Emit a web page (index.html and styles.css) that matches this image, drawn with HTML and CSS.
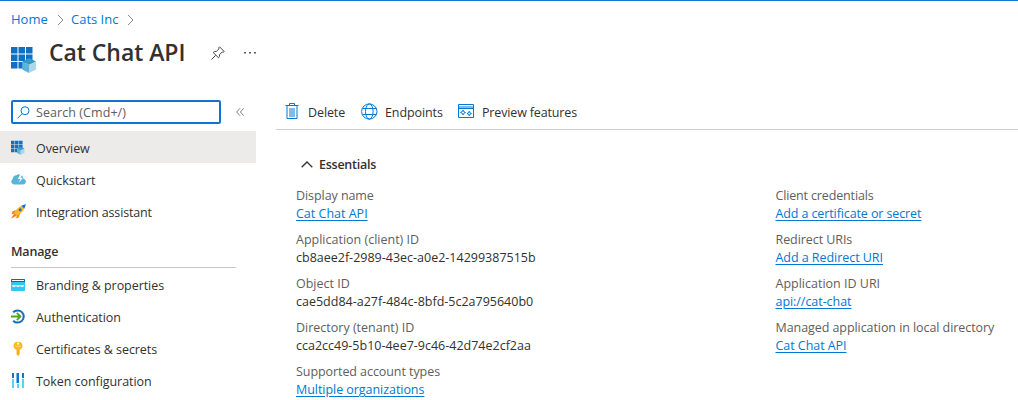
FILE: index.html
```html
<!DOCTYPE html>
<html lang="en">
<head>
<meta charset="utf-8">
<title>Cat Chat API</title>
<link rel="stylesheet" href="styles.css">
</head>
<body>
<svg width="0" height="0" class="defs" aria-hidden="true">
  <symbol id="app" viewBox="0 0 26 27">
    <path fill="#1070c4" d="M0 1h6.500v6.500H0zM7.500 1H14v6.500H7.500zM15 1h6.500v6.500H15zM0 8.500h6.500V15H0zM7.500 8.500H14V15H7.500zM15 8.500h6.500V15H15zM0 16h6.500v6.500H0zM7.500 16H14v6.500H7.500z"/>
    <path fill="#3999c6" d="M11.200 15.500 18 12l7 3.500-7 3.500z"/>
    <path fill="#5ab4d9" d="M11.200 15.500 18 19v8l-6.800-3.500z"/>
    <path fill="#a8d8ea" d="M25 15.500 18 19v8l7-3.500z"/>
  </symbol>
</svg>
<header class="top">
  <nav class="crumbs">
    <a class="home">Home</a><svg width="7" height="12" class="sep"><path d="M1 1l5 5-5 5"/></svg>
    <a class="cats">Cats Inc</a><svg width="7" height="12" class="sep"><path d="M1 1l5 5-5 5"/></svg>
  </nav>
  <div class="titlebar">
    <svg class="logo" width="26" height="27"><use href="#app"/></svg>
    <h1>Cat Chat API</h1>
    <svg class="pin" width="14" height="14" viewBox="0 0 14 14"><path d="M8.500.8 13.200 5.500 12.200 6.200 11.200 6 8.600 8.600Q8.900 10.500 7.500 11.800L2.200 6.500Q3.500 5.100 5.400 5.400L8 2.800 7.800 1.700zM4.700 9.300.5 13.500"/></svg>
    <svg class="dots" width="12" height="2"><path d="M0 0h2v1.500H0zM5 0h2v1.500H5zM10 0h2v1.500h-2z"/></svg>
  </div>
</header>
<div class="layout">
  <aside class="side">
    <div class="searchrow">
      <div class="search">
        <svg width="13" height="13" viewBox="0 0 13 13"><circle cx="8" cy="4.700" r="4"/><path d="M5.100 7.700.5 12.400"/></svg>
        <span>Search (Cmd+/)</span>
      </div>
      <svg class="collapse" width="8" height="8"><path d="M4 .3.700 4 4 7.700M7.700.3 4.400 4l3.300 3.700"/></svg>
    </div>
    <ul class="menu">
      <li class="active"><svg width="14" height="15"><use href="#app"/></svg><span>Overview</span></li>
      <li><svg width="15" height="15" viewBox="0 0 15 15"><path fill="#59b4d9" d="M3 12.500A3 3 0 0 1 1.700 7Q2 3.500 5.500 3.200 7 1.700 9 2.700 12 3 12.300 6.500 15 7.200 15 9.800 14.700 12.300 12 12.500z"/><path fill="#fff" d="M9.500 2 6.800 7h2.400L8 10.800 12 5.700H9.600L11.500 2z"/></svg><span>Quickstart</span></li>
      <li><svg width="15" height="15" viewBox="0 0 15 15"><path fill="#f78d1e" d="M5 6 1.500 7.300.5 10.500 4 9.500zM9 9.800 8 13.500 5 14.500 6 10.800z"/><path fill="#f47b20" d="M3.600 9 0 14.700 6 11.400z"/><path fill="#ffb52e" d="M3.300 9.300Q5.500 3.700 10.500 1.700L13.300 4.600Q11 9.600 5.700 11.700z"/><path fill="#0f6fc5" d="M10.400 1.700 14.900 0 13.300 4.700z"/><circle cx="9.200" cy="5.800" r="1.500" fill="#1374c9"/></svg><span class="snug">Integration assistant</span></li>
    </ul>
    <h2>Manage</h2>
    <ul class="menu">
      <li><svg width="14" height="12" viewBox="0 0 14 12"><path fill="#32c8ee" d="M0 2h14v9.300q0 .7-.7.700H.7Q0 12 0 11.300z"/><path fill="#1763b3" d="M.7 0h12.600q.7 0 .7.700V3H0V.7Q0 0 .7 0"/><path fill="#fff" d="M1 1h12v1H1z"/><path fill="none" stroke="#fff" stroke-width=".8" d="m1.500 6 .7 2 .8-2 .8 2 .8-2M5.500 6l.7 2L7 6l.8 2 .7-2m1 0 .7 2 .8-2 .8 2 .8-2"/></svg><span>Branding &amp; properties</span></li>
      <li><svg width="15" height="15" viewBox="0 0 15 15"><path fill="none" stroke="#0f6fc5" stroke-width="2" d="M2.200 3.300A6.100 6.100 0 1 1 2.200 11.700"/><path fill="none" stroke="#55a51c" stroke-width="1.800" d="M0 7.500h9M5.800 3.900l3.600 3.600-3.600 3.600"/></svg><span>Authentication</span></li>
      <li><svg width="15" height="15" viewBox="0 0 15 15"><path fill="#fdb924" d="M5.500 8.700Q2.500 7.700 2.500 4.700 2.600.8 7 .7 11.400.8 11.500 4.700 11.500 7.700 8.700 8.700V13.200L7.300 15 5.500 13.500z"/><circle cx="7" cy="2.700" r="1.100" fill="#fff"/><path fill="#fde08a" d="M4.400 4.800h5.200v.9H4.400z"/><path fill="#e8a21a" d="M6.500 8.700h.8v5h-.8z"/></svg><span>Certificates &amp; secrets</span></li>
      <li><svg width="14" height="15" viewBox="0 0 14 15"><path fill="#1673c8" d="M1 0h2v5H1zM6 0h2v10H6zM11 0h2v5h-2z"/><path fill="#55d4f2" d="M1 6h2v9H1zM6 11h2v4H6zM11 6h2v9h-2z"/><path fill="#76bdec" d="M5 0h1v10H5z"/></svg><span>Token configuration</span></li>
    </ul>
  </aside>
  <main class="main">
    <div class="toolbar">
      <button class="delete"><svg width="14" height="17" viewBox="0 0 14 17"><path fill="#83b9eb" stroke="none" d="M4 5h6v9H4z"/><path d="M.5 2.500h13M4.500 2V.5h5V2M2 3v12.500h10V3"/></svg><span>Delete</span></button>
      <button class="endpoints"><svg width="17" height="17" viewBox="0 0 17 17"><path d="M.6 8.500a7.700 7.600 0 1 0 15.400 0 7.700 7.600 0 1 0-15.400 0M4.500 8.500a3.800 7.600 0 1 0 7.600 0 3.800 7.600 0 1 0-7.600 0M1.500 5.500h14M1.500 11.500h14"/></svg><span>Endpoints</span></button>
      <button class="preview"><svg width="16" height="14" viewBox="0 0 16 14"><path fill="#83b9eb" stroke="none" d="M1 2h14v2H1z"/><path d="M.5.500h15v13H.5zM1 4.500h14M5 6l.8 1.700L7.500 8.500l-1.700.8L5 11l-.8-1.700-1.700-.8 1.700-.8zM11.200 7.200l.7 1.600 1.600.7-1.600.7-.7 1.600-.7-1.600-1.600-.7 1.600-.7z"/></svg><span class="snug">Preview features</span></button>
    </div>
    <section class="essentials">
      <h3><svg width="12" height="7"><path d="M.7 6.300 6 1l5.300 5.300"/></svg><span>Essentials</span></h3>
      <div class="cols">
        <dl>
          <dt>Display name</dt><dd><a class="plain">Cat Chat API</a></dd>
          <dt class="plain">Application (client) ID</dt><dd>cb8aee2f-2989-43ec-a0e2-14299387515b</dd>
          <dt class="plain">Object ID</dt><dd>cae5dd84-a27f-484c-8bfd-5c2a795640b0</dd>
          <dt class="plain">Directory (tenant) ID</dt><dd>cca2cc49-5b10-4ee7-9c46-42d74e2cf2aa</dd>
          <dt>Supported account types</dt><dd><a>Multiple organizations</a></dd>
        </dl>
        <dl>
          <dt class="snug">Client credentials</dt><dd><a class="snug">Add a certificate or secret</a></dd>
          <dt>Redirect URIs</dt><dd><a>Add a Redirect URI</a></dd>
          <dt class="plain">Application ID URI</dt><dd><a>api://cat-chat</a></dd>
          <dt>Managed application in local directory</dt><dd><a>Cat Chat API</a></dd>
        </dl>
      </div>
    </section>
  </main>
</div>
</body>
</html>
```
FILE: styles.css
```css
* { box-sizing: border-box; }
body { margin: 0; width: 1018px; height: 400px; overflow: hidden; background: #fff; color: #323130; font: 12.5px/18px "Open Sans", "Noto Sans", sans-serif; white-space: nowrap; }
h1, h2, h3, ul, dl, dd { margin: 0; padding: 0; }
ul { list-style: none; }
svg { display: block; flex: none; }
.defs { position: absolute; }
.top { height: 91px; border-top: 1px solid #0f78d4; }
.crumbs { display: flex; align-items: center; height: 18px; margin: 9px 0 0 11px; font-size: 13px; }
.crumbs a { color: #0078d4; }
.home { width: 46px; }
.cats { width: 56px; margin-left: 7px; }
.sep { fill: none; stroke: #8a8886; margin-top: 2px; }
.titlebar { display: flex; align-items: flex-start; padding: 8px 0 0 11px; }
.logo { margin-top: 10px; }
h1 { width: 162px; margin-left: 12px; font-size: 23px; line-height: 32px; font-weight: 600; letter-spacing: -.05px; }
.pin { fill: none; stroke: #484644; margin-top: 10px; }
.dots { fill: #605e5c; margin: 16px 0 0 19px; }
.layout { display: flex; }
.side { width: 276px; }
.searchrow { display: flex; align-items: center; padding: 9px 0 7px 11px; }
.search { display: flex; align-items: center; gap: 6px; width: 210px; height: 24px; padding-left: 4px; border: 2px solid #0f74d0; border-radius: 2px; color: #605e5c; }
.search span { padding-top: 2px; letter-spacing: .07px; }
.search svg { fill: none; stroke: #0078d4; }
.collapse { margin-left: 15px; fill: none; stroke: #605e5c; stroke-width: .8; }
.menu li { display: grid; grid-template-columns: 25px 1fr; align-items: center; width: 256px; height: 32px; padding-left: 11px; letter-spacing: -.06px; }
.menu li svg { margin-top: 1px; }
.menu li span { padding-top: 4px; }
.menu li .snug, .snug, dd .snug { letter-spacing: -.15px; }
.active { background: #edebe9; }
h2 { width: 225px; height: 25px; margin: 16px 0 0 11px; font-size: 12.5px; line-height: 18px; font-weight: 600; letter-spacing: -.15px; border-bottom: 1px solid #c8c6c4; }
.main { flex: 1; }
.toolbar { display: flex; height: 39px; border-bottom: 1px solid #d2d0ce; padding: 3px 0 0 9px; }
.toolbar button { display: flex; align-items: center; height: 36px; padding: 0; border: 0; background: none; color: inherit; font: inherit; letter-spacing: -.1px; }
.toolbar button span { padding-top: 2px; }
.toolbar svg { fill: none; stroke: #0078d4; margin-top: -2px; }
.delete { width: 76px; gap: 9px; }
.endpoints { width: 97px; gap: 7px; }
.preview { gap: 8px; }
.essentials { padding: 26px 0 0 20px; }
h3 { display: flex; align-items: center; gap: 6px; padding-left: 5px; font-size: 12.5px; line-height: 18px; font-weight: 600; letter-spacing: -.25px; }
h3 svg { fill: none; stroke: #323130; stroke-width: 1.3; margin-top: -2px; }
.cols { display: grid; grid-template-columns: 479.500px 1fr; padding-top: 13px; }
dt { color: #605e5c; line-height: 18px; letter-spacing: -.07px; }
dd { height: 26px; line-height: 18px; }
dd a { color: #0078d4; letter-spacing: -.05px; text-decoration: underline; text-underline-offset: 2px; text-decoration-thickness: 1px; }
dt.snug { letter-spacing: -.15px; }
dd .snug { letter-spacing: -.11px; }
.plain, dt.plain { letter-spacing: 0; }
```
